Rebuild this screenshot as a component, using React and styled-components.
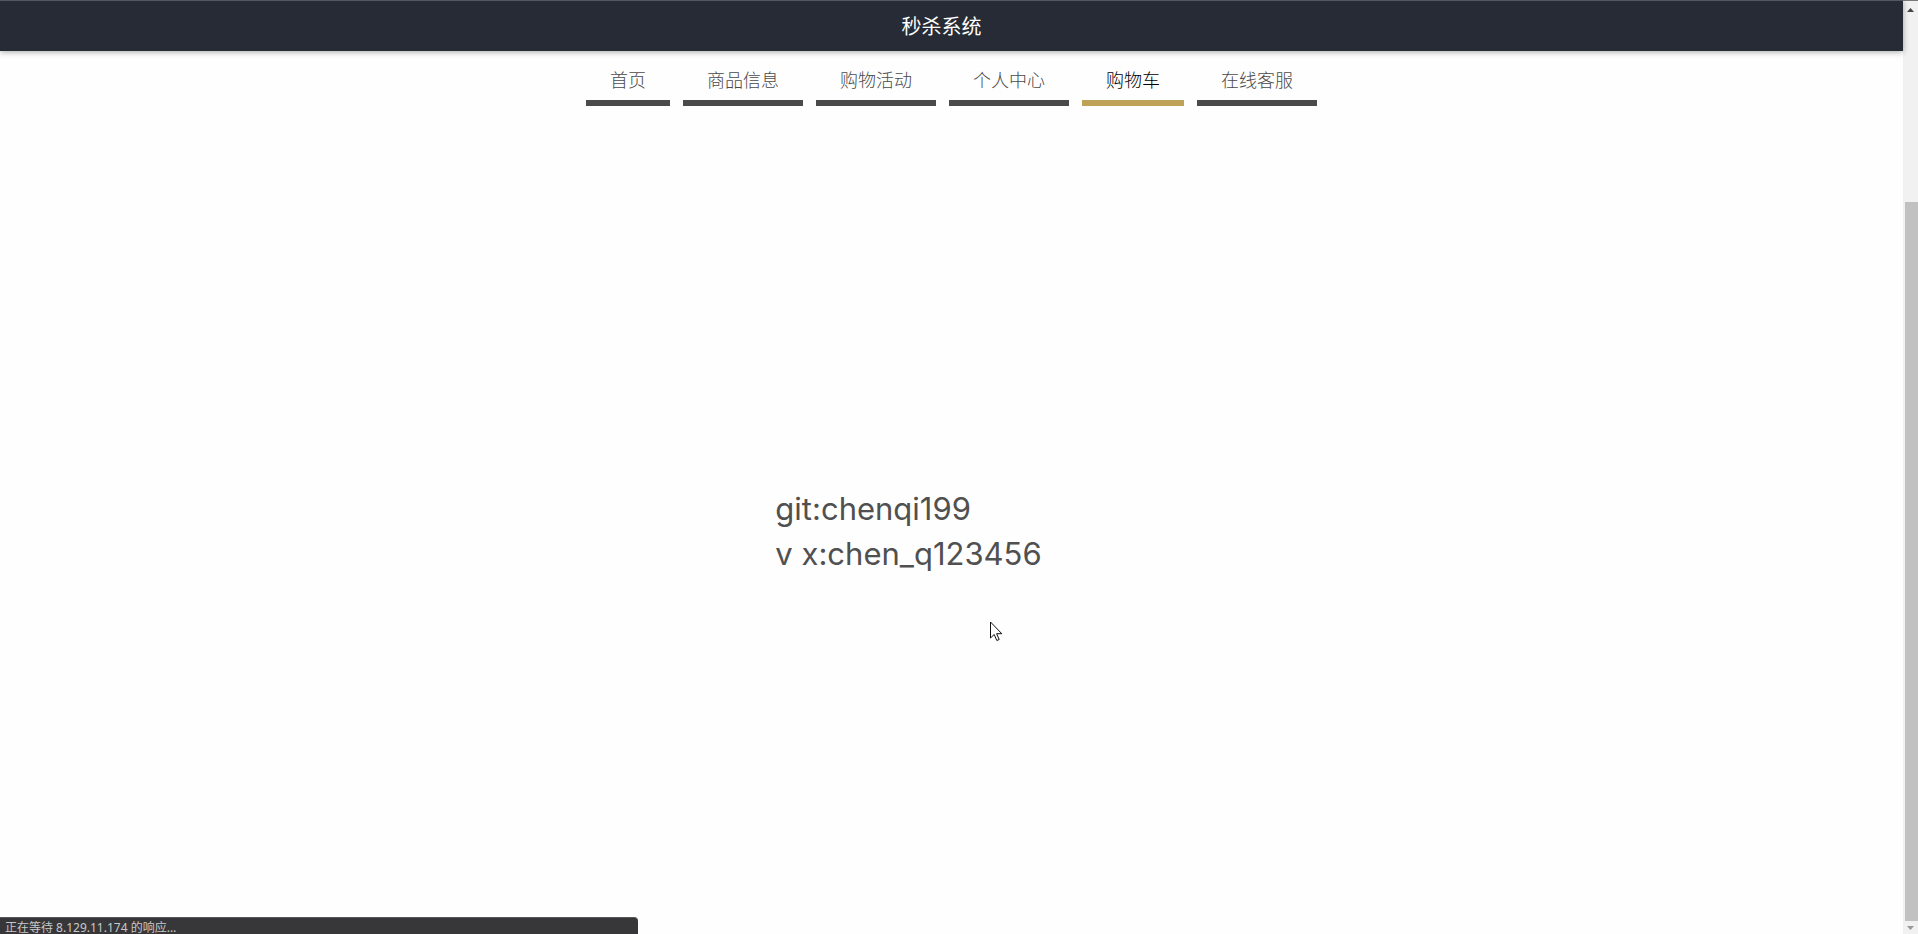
import React from 'react';
import styled, { createGlobalStyle } from 'styled-components';

const GlobalStyle = createGlobalStyle`
  * { box-sizing: border-box; }
  body {
    margin: 0;
    background: #fefefe;
    font-family: "Noto Sans", "Noto Sans CJK SC", sans-serif;
  }
`;

const Shell = styled.div`
  display: flex;
  height: 100vh;
  overflow: hidden;
`;

const Page = styled.div`
  position: relative;
  display: flex;
  flex: 1;
  flex-direction: column;
  min-width: 0;
`;

const Header = styled.header`
  display: flex;
  flex: none;
  align-items: center;
  justify-content: center;
  height: 51px;
  padding-right: 20px;
  border-top: 1px solid #54585e;
  background: #262b35;
  box-shadow: 0 1px 6px rgba(0, 0, 0, 0.35);
`;

const Title = styled.h1`
  margin: 0;
  color: #fff;
  font-family: "Noto Sans CJK SC", sans-serif;
  font-size: 20px;
  font-weight: 400;
  line-height: 28px;
`;

const Nav = styled.nav`
  display: flex;
  flex: none;
  justify-content: center;
  gap: 13px;
  padding-top: 9px;
`;

const NavLink = styled.a`
  padding: 0 24px 2px;
  border-bottom: 6px solid ${(p) => (p.$active ? '#bda257' : '#4a4a4a')};
  color: ${(p) => (p.$active ? '#000' : '#4a4a4a')};
  font-family: "Noto Sans CJK SC", sans-serif;
  font-size: 18px;
  font-weight: 300;
  line-height: 38px;
  text-decoration: none;
`;

const Content = styled.main`
  display: flex;
  flex: 1;
  align-items: center;
  justify-content: center;
  padding: 22px 86px 0 0;
`;

const Contact = styled.p`
  margin: 0;
  color: #505050;
  font-family: Inter, sans-serif;
  font-size: 31px;
  font-weight: 400;
  line-height: 45px;
`;

const Pointer = styled.svg`
  position: absolute;
  top: 621px;
  left: calc(50% + 38px);
  width: 13px;
  height: 21px;
`;

const StatusBar = styled.div`
  position: absolute;
  bottom: 0;
  left: 0;
  width: 638px;
  max-width: 100%;
  height: 17px;
  padding: 3px 0 0 5px;
  border-top: 1px solid #58585a;
  border-top-right-radius: 4px;
  background: #37373a;
  color: #c8c8c8;
  font-size: 12px;
  line-height: 13px;
`;

const Scrollbar = styled.div`
  display: flex;
  flex: none;
  flex-direction: column;
  width: 15px;
  border-top: 1px solid #77797b;
  background: #f1f1f1;
`;

const ArrowButton = styled.button`
  display: flex;
  flex: none;
  align-items: center;
  justify-content: center;
  height: ${(p) => (p.$end ? 13 : 17)}px;
  padding: 0;
  border: 0;
  background: transparent;
  color: ${(p) => (p.$end ? '#999' : '#444')};
`;

const Track = styled.div`
  display: flex;
  flex: 1;
  flex-direction: column;
  justify-content: flex-end;
  padding-left: 2px;
`;

const Thumb = styled.div`
  height: 79.6%;
  background: #c1c1c1;
`;

const LINKS = ['首页', '商品信息', '购物活动', '个人中心', '购物车', '在线客服'];

export default function App() {
  return (
    <>
      <GlobalStyle />
      <Shell>
        <Page>
          <Header>
            <Title>秒杀系统</Title>
          </Header>
          <Nav>
            {LINKS.map((label) => (
              <NavLink key={label} href="#" $active={label === '购物车'}>
                {label}
              </NavLink>
            ))}
          </Nav>
          <Content>
            <Contact>
              git:chenqi199
              <br />v x:chen_q123456
            </Contact>
          </Content>
          <StatusBar role="status">正在等待 8.129.11.174 的响应...</StatusBar>
          <Pointer viewBox="0 0 13 21" aria-hidden="true">
            <path
              d="M.5 1v16l3.7-3.5 2.6 6 2.4-1-2.6-5.8h5.2z"
              fill="#fff"
              stroke="#111"
            />
          </Pointer>
        </Page>
        <Scrollbar>
          <ArrowButton type="button" aria-label="向上滚动">
            <svg width="7" height="4" viewBox="0 0 7 4">
              <path d="M0 4L3.5 0 7 4z" fill="currentColor" />
            </svg>
          </ArrowButton>
          <Track>
            <Thumb />
          </Track>
          <ArrowButton type="button" aria-label="向下滚动" $end>
            <svg width="7" height="4" viewBox="0 0 7 4">
              <path d="M0 0h7L3.5 4z" fill="currentColor" />
            </svg>
          </ArrowButton>
        </Scrollbar>
      </Shell>
    </>
  );
}
